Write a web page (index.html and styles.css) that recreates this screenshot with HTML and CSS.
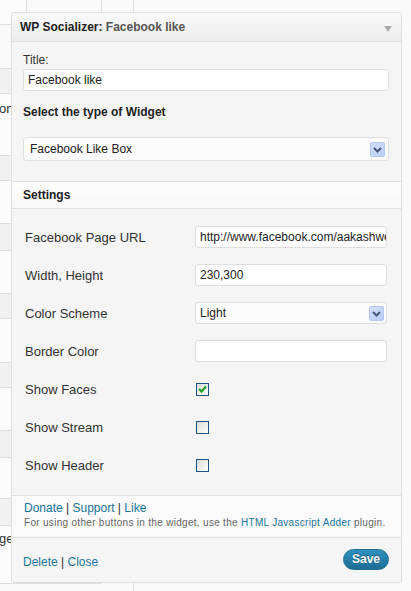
FILE: index.html
```html
<!DOCTYPE html>
<html>
<head>
<meta charset="utf-8">
<link rel="stylesheet" href="styles.css">
</head>
<body>
<div class="bg">
  <div class="bg-list">
    <div class="bg-box"></div>
    <div class="bg-gap"></div>
    <div class="r d first h24"></div>
    <div class="r w h61"><span class="frag">on</span></div>
    <div class="r d h24"></div>
    <div class="r w h42"></div>
    <div class="r d h26"></div>
    <div class="r w h42"></div>
    <div class="r d h24"></div>
    <div class="r w h43"></div>
    <div class="r d h24"></div>
    <div class="r w h42"></div>
    <div class="r d h26"></div>
    <div class="r w h40"></div>
    <div class="r d h26"></div>
    <div class="r w h57"><span class="frag low">ge</span></div>
  </div>
  <div class="bg-mid"><div class="bg-mid-top"></div></div>
</div>

<div class="widget">
  <div class="w-head">
    <span class="w-title">WP Socializer: <span class="w-name">Facebook like</span></span>
    <span class="w-arrow"></span>
  </div>
  <div class="w-top">
    <label class="lbl">Title:</label>
    <div class="field wide">Facebook like</div>
    <div class="sub">Select the type of Widget</div>
    <div class="select wide">
      <span>Facebook Like Box</span>
      <span class="sel-btn"><svg width="13" height="13" viewBox="0 0 13 13"><polyline points="3,5 6.5,8.5 10,5" fill="none" stroke="#4a5a7c" stroke-width="2"/></svg></span>
    </div>
  </div>
  <div class="sec-head">Settings</div>
  <div class="settings">
    <span class="slbl">Facebook Page URL</span>
    <div class="field">http://www.facebook.com/aakashweb</div>
    <span class="slbl">Width, Height</span>
    <div class="field">230,300</div>
    <span class="slbl">Color Scheme</span>
    <div class="select short">
      <span>Light</span>
      <span class="sel-btn"><svg width="13" height="13" viewBox="0 0 13 13"><polyline points="3,5 6.5,8.5 10,5" fill="none" stroke="#4a5a7c" stroke-width="2"/></svg></span>
    </div>
    <span class="slbl">Border Color</span>
    <div class="field"></div>
    <span class="slbl">Show Faces</span>
    <span class="cb"><svg width="11" height="11" viewBox="0 0 11 11"><polyline points="2,5 4.5,7.5 9,2.5" fill="none" stroke="#21a121" stroke-width="2.2"/></svg></span>
    <span class="slbl">Show Stream</span>
    <span class="cb"></span>
    <span class="slbl">Show Header</span>
    <span class="cb"></span>
  </div>
  <div class="links">
    <div class="link-line"><a class="lnk">Donate</a> | <a class="lnk">Support</a> | <a class="lnk">Like</a></div>
    <div class="note">For using other buttons in the widget, use the <a class="lnk">HTML Javascript Adder</a> plugin.</div>
  </div>
  <div class="actions">
    <div class="act-links"><a class="lnk">Delete</a> | <a class="lnk">Close</a></div>
    <span class="save">Save</span>
  </div>
</div>
</body>
</html>
```

FILE: styles.css
```css
html, body {
  margin: 0;
  padding: 0;
}
body {
  background: #f9f9f9;
  font-family: "Liberation Sans", Arial, sans-serif;
  color: #333;
  width: 411px;
  height: 591px;
  overflow: hidden;
  position: relative;
}

/* background page */
.bg {
  display: flex;
  height: 591px;
}
.bg-list {
  width: 101px;
  display: flex;
  flex-direction: column;
}
.bg-box {
  width: 26px;
  height: 24px;
  border-right: 1px solid #dfdfdf;
  border-bottom: 1px solid #dfdfdf;
  border-bottom-right-radius: 3px;
  background: #fcfcfc;
}
.bg-gap { height: 43px; }
.r {
  border-bottom: 1px solid #dfdfdf;
  font-size: 13px;
  line-height: 15px;
}
.r.first { border-top: 1px solid #dfdfdf; }
.r.d { background: #f1f1f1; }
.r.w { background: #fcfcfc; }
.h24 { height: 24px; }
.h26 { height: 26px; }
.h40 { height: 40px; }
.h42 { height: 42px; }
.h43 { height: 43px; }
.h57 { height: 57px; }
.h61 { height: 61px; }
.frag {
  display: block;
  margin-top: 7px;
  margin-left: -1px;
}
.frag.low { margin-top: 5px; }
.bg-mid {
  width: 32px;
  border-right: 1px solid #dfdfdf;
}
.bg-mid-top {
  height: 20px;
  border-left: 1px solid #dfdfdf;
}

/* widget */
.widget {
  position: absolute;
  left: 11px;
  top: 12px;
  width: 389px;
  height: 569px;
  border: 1px solid #dfdfdf;
  border-radius: 3px;
  background: #f5f5f5;
  display: flex;
  flex-direction: column;
  overflow: hidden;
}
.w-head {
  height: 28px;
  flex: none;
  border-bottom: 1px solid #dfdfdf;
  background: linear-gradient(#f9f9f9, #ececec);
  display: flex;
  align-items: center;
  justify-content: space-between;
  padding: 0 9px 0 8px;
  font-weight: bold;
  font-size: 12px;
  color: #222;
}
.w-name { color: #555; }
.w-arrow {
  width: 0;
  height: 0;
  border-left: 4px solid transparent;
  border-right: 4px solid transparent;
  border-top: 6px solid #aaa;
  margin-top: 3px;
}
.w-top {
  flex: none;
  padding: 11px 12px 20px 11px;
  border-bottom: 1px solid #dfdfdf;
}
.lbl {
  display: block;
  font-size: 12px;
  line-height: 15px;
}
.field {
  height: 20px;
  border: 1px solid #dfdfdf;
  border-radius: 3px;
  background: #fff;
  font-size: 12px;
  line-height: 20px;
  padding: 0 4px;
  overflow: hidden;
  white-space: nowrap;
  color: #222;
}
.field.wide { margin-top: 1px; }
.sub {
  font-weight: bold;
  font-size: 12px;
  line-height: 15px;
  margin-top: 14px;
  color: #222;
}
.select {
  border: 1px solid #dfdfdf;
  border-radius: 3px;
  background: #fcfcfc;
  display: flex;
  align-items: center;
  justify-content: space-between;
  font-size: 12px;
  color: #222;
}
.select.wide {
  margin-top: 17px;
  height: 22px;
  padding: 0 3px 0 6px;
}
.select.short {
  height: 20px;
  padding: 0 2px 0 4px;
}
.sel-btn {
  width: 13px;
  height: 13px;
  border: 1px solid #b5c8f3;
  border-radius: 2px;
  background: linear-gradient(135deg, #d3e0fd, #b9cdf8);
  display: flex;
}
.sec-head {
  flex: none;
  height: 26px;
  border-bottom: 1px solid #dfdfdf;
  background: linear-gradient(#fdfdfd, #f8f8f8);
  font-weight: bold;
  font-size: 12px;
  line-height: 26px;
  padding-left: 11px;
  color: #222;
}
.settings {
  flex: none;
  padding: 9px 0 11px 13px;
  border-bottom: 1px solid #dfdfdf;
  display: grid;
  grid-template-columns: 170px 192px;
  grid-auto-rows: 38px;
  align-items: center;
}
.slbl {
  font-size: 13px;
  line-height: 15px;
  color: #333;
}
.cb {
  width: 11px;
  height: 11px;
  margin-left: 1px;
  border: 1px solid #1c5180;
  background: linear-gradient(135deg, #dcdcd7, #ffffff);
  display: flex;
}
.links {
  flex: none;
  height: 36px;
  padding: 5px 12px 0 12px;
  background: #fafafa;
  border-bottom: 1px solid #dfdfdf;
}
.link-line {
  font-size: 12px;
  line-height: 15px;
  color: #333;
}
.lnk {
  color: #21759b;
  text-decoration: none;
}
.note {
  margin-top: 1px;
  font-size: 10px;
  line-height: 12px;
  letter-spacing: 0.3px;
  color: #666;
  white-space: nowrap;
}
.actions {
  flex: 1;
  display: flex;
  align-items: center;
  justify-content: space-between;
  padding: 0 12px 0 11px;
}
.act-links {
  font-size: 12px;
  line-height: 15px;
  margin-top: 5px;
}
.save {
  width: 46px;
  height: 21px;
  box-sizing: border-box;
  border: 1px solid #1f6c92;
  border-radius: 11px;
  background: linear-gradient(#3091c0, #1d6c93);
  color: #fff;
  font-weight: bold;
  font-size: 12px;
  line-height: 19px;
  text-align: center;
  text-shadow: 0 -1px 0 rgba(0,0,0,0.3);
  margin-top: -1px;
}
```
